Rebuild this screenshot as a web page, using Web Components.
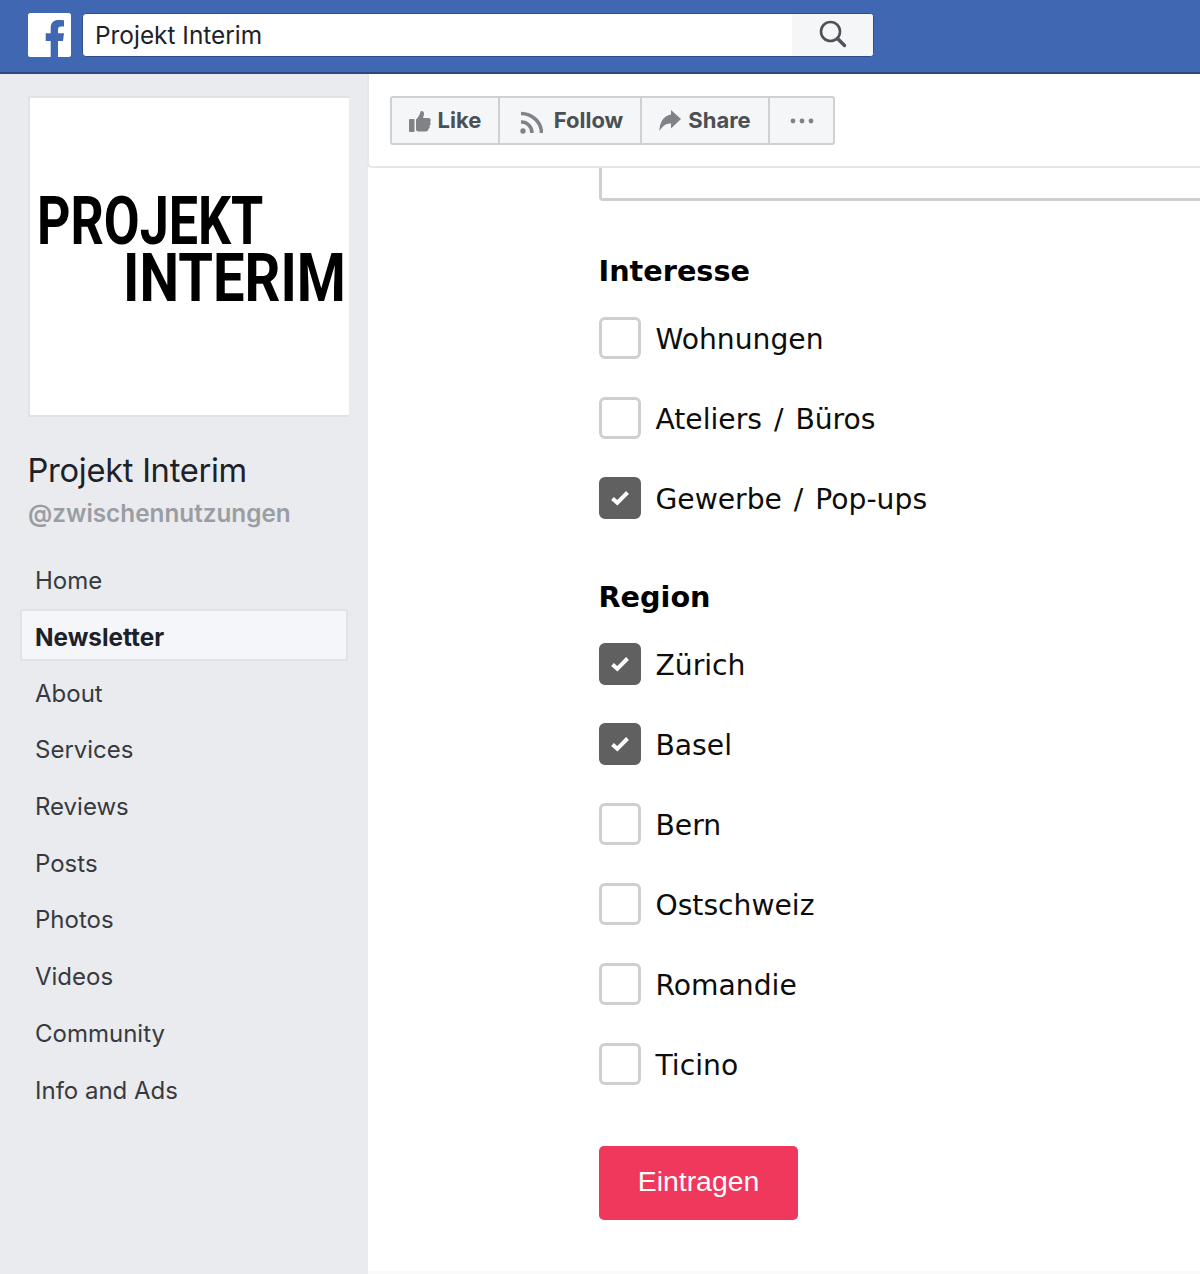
<!DOCTYPE html>
<html lang="de">
<head>
<meta charset="utf-8">
<title>Projekt Interim</title>
<style>
  html, body { margin: 0; padding: 0; background: #fff; }
  body { width: 1200px; height: 1274px; overflow: hidden; font-family: "Inter", "Liberation Sans", sans-serif; }
</style>
</head>
<body>
<fb-page>
  <fb-header slot="header" query="Projekt Interim"></fb-header>
  <fb-sidebar slot="sidebar" name="Projekt Interim" handle="@zwischennutzungen">
    <nav-item>Home</nav-item>
    <nav-item active>Newsletter</nav-item>
    <nav-item>About</nav-item>
    <nav-item>Services</nav-item>
    <nav-item>Reviews</nav-item>
    <nav-item>Posts</nav-item>
    <nav-item>Photos</nav-item>
    <nav-item>Videos</nav-item>
    <nav-item>Community</nav-item>
    <nav-item>Info and Ads</nav-item>
  </fb-sidebar>
  <action-bar slot="actions"></action-bar>
  <signup-form slot="content">
    <check-group title="Interesse">
      <check-row>Wohnungen</check-row>
      <check-row>Ateliers / Büros</check-row>
      <check-row checked>Gewerbe / Pop-ups</check-row>
    </check-group>
    <check-group title="Region">
      <check-row checked>Zürich</check-row>
      <check-row checked>Basel</check-row>
      <check-row>Bern</check-row>
      <check-row>Ostschweiz</check-row>
      <check-row>Romandie</check-row>
      <check-row>Ticino</check-row>
    </check-group>
  </signup-form>
</fb-page>

<script>
class FbPage extends HTMLElement {
    constructor() {
        super()
        this.attachShadow({ mode: "open" }).innerHTML = `
        <style>
            :host { display: grid; grid-template-columns: 368px 1fr; grid-template-rows: 74px 1200px; width: 1200px; height: 1274px; }
            .top { grid-column: 1 / 3; }
            .main { display: flex; flex-direction: column; min-width: 0; }
            .foot { margin-top: auto; height: 3px; background: #fafafa; }
        </style>
        <div class="top"><slot name="header"></slot></div>
        <slot name="sidebar"></slot>
        <div class="main">
            <slot name="actions"></slot>
            <slot name="content"></slot>
            <div class="foot"></div>
        </div>
        `
    }
}

class FbHeader extends HTMLElement {
    constructor() {
        super()
        this.attachShadow({ mode: "open" }).innerHTML = `
        <style>
            :host { display: block; box-sizing: border-box; height: 74px; background: #4067b2; border-bottom: 2px solid #29487d; }
            .row { display: flex; align-items: flex-start; gap: 11px; padding: 13px 0 0 28px; }
            .logo { width: 43px; height: 44px; display: block; }
            .search { display: flex; width: 792px; height: 44px; box-sizing: border-box; border: 1px solid #2f4d8c; border-radius: 4px; overflow: hidden; background: #fff; }
            .query { flex: 1; padding-left: 12px; font: 400 24.400px/42px "Inter", sans-serif; color: #1d2129; }
            .btn { width: 81px; background: #f5f6f7; display: flex; align-items: center; justify-content: center; }
            .btn svg { width: 30px; height: 30px; margin-top: -3px; }
        </style>
        <div class="row">
            <svg class="logo" viewBox="0 0 43 44">
                <rect width="43" height="44" rx="2.500" fill="#fff"/>
                <path fill="#4067b2" d="M22.700 44V28h-5v-7.700h5V15c0-5.500 3.300-8 7.800-8 2.300 0 4.500.2 5.500.3v6.200h-3c-2.200 0-3 1.100-3 3v3.800h6l-1 7.700h-5v16z"/>
            </svg>
            <div class="search">
                <div class="query">${this.getAttribute("query")}</div>
                <div class="btn">
                    <svg viewBox="0 0 30 30" fill="none" stroke="#4f5359">
                        <circle cx="12.500" cy="12.500" r="9.500" stroke-width="2.600"/>
                        <path d="M19.500 19.500L26.500 26.500" stroke-width="3.400" stroke-linecap="round"/>
                    </svg>
                </div>
            </div>
        </div>
        `
    }
}

class FbSidebar extends HTMLElement {
    constructor() {
        super()
        this.attachShadow({ mode: "open" }).innerHTML = `
        <style>
            :host { display: block; background: #e9ebee; padding: 22px 20px 0 20px; box-sizing: border-box; font-family: "Inter", sans-serif; }
            .pic { width: 321px; height: 321px; margin-left: 8px; box-sizing: border-box; background: #fff; border: 2px solid #e0e2e6; border-right: 0; display: flex; flex-direction: column; justify-content: center; overflow: hidden; font: 700 67px/57.500px "Roboto", "Liberation Sans", sans-serif; color: #000; padding-bottom: 13px; }
            .pic span { display: block; white-space: nowrap; width: max-content; transform-origin: 0 50%; }
            .l1 { margin-left: 7px; transform: scaleX(.776); }
            .l2 { margin-left: 93px; transform: scaleX(.837); }
            .name { margin: 33px 0 0 7.500px; font-size: 32.700px; line-height: 40px; color: #1d2129; letter-spacing: -.3px; }
            .handle { margin: 7px 0 0 8px; font-size: 24.300px; line-height: 32px; font-weight: 600; color: #9a9da3; }
            nav { margin-top: 25px; display: flex; flex-direction: column; width: 328px; }
        </style>
        <div class="pic"><span class="l1">PROJEKT</span><span class="l2">INTERIM</span></div>
        <div class="name">${this.getAttribute("name")}</div>
        <div class="handle">${this.getAttribute("handle")}</div>
        <nav><slot></slot></nav>
        `
    }
}

class NavItem extends HTMLElement {
    constructor() {
        super()
        this.attachShadow({ mode: "open" }).innerHTML = `
        <style>
            :host { display: block; box-sizing: border-box; height: 56.700px; padding: 0 0 0 15px; font: 400 24px/53px "Inter", sans-serif; color: #373a40; }
            :host([active]) { background: #f5f6f9; border: 2px solid #e0e2e6; border-radius: 3px; font-weight: 700; font-size: 24.300px; color: #1d2129; padding-left: 13px; height: 52px; line-height: 52px; margin: -1.500px 0 5.500px; }
        </style>
        <slot></slot>
        `
    }
}

class ActionBar extends HTMLElement {
    constructor() {
        super()
        this.attachShadow({ mode: "open" }).innerHTML = `
        <style>
            :host { display: block; box-sizing: border-box; height: 94px; margin-left: -1px; padding: 22px 0 0 21px; border-left: 2px solid #e4e6ea; border-bottom: 2px solid #e4e6ea; border-bottom-left-radius: 5px; background: #fff; position: relative; z-index: 1; }
            .group { display: inline-flex; height: 49px; box-sizing: border-box; border: 2px solid #ced0d4; border-radius: 3px; background: #f5f6f7; font: 700 22px/45px "Inter", sans-serif; color: #4b4f56; }
            .b { display: flex; align-items: center; justify-content: center; gap: 7px; box-sizing: border-box; border-right: 2px solid #ced0d4; }
            .b:last-child { border-right: 0; }
            .like { width: 108px; }
            .follow { width: 142px; gap: 11px; padding-left: 3px; }
            .share { width: 128px; }
            .more { width: 63px; }
            svg { display: block; fill: #7f8388; }
        </style>
        <div class="group">
            <div class="b like">
                <svg width="22" height="22" viewBox="0 0 22 22"><rect x="0" y="9" width="5.500" height="13" rx="1"/><path d="M7 20V9.500c2-2 4-4.500 4.500-8 .2-1 3.800-1 3.500 2.500-.1 1.500-.6 2.500-1 4h5.500c2.500 0 2.800 3 1.500 4 1 1 .7 3-.5 3.700.6 1.300 0 2.800-1.200 3.300.2 1.500-.8 2.500-2.300 2.500h-7c-1.500 0-2.500-.7-3.500-1.500z"/></svg>
                <span>Like</span>
            </div>
            <div class="b follow">
                <svg width="23" height="23" viewBox="0 0 23 23" style="fill:none;margin-top:3px"><circle cx="3" cy="20" r="2.700" fill="#7f8388"/><path d="M1 11c6-.2 11 4.500 11 11M1 2.500c11 0 20.500 8.500 20.500 19.500" stroke="#7f8388" stroke-width="3.500"/></svg>
                <span>Follow</span>
            </div>
            <div class="b share">
                <svg width="22" height="21" viewBox="0 0 22 21"><path d="M12 0l10 9-10 9.500v-5C7 13 3.500 16 .5 21 .5 13 4 6 12 4.500z"/></svg>
                <span>Share</span>
            </div>
            <div class="b more">
                <svg width="24" height="6" viewBox="0 0 24 6"><circle cx="3" cy="3" r="2.400"/><circle cx="12" cy="3" r="2.400"/><circle cx="21" cy="3" r="2.400"/></svg>
            </div>
        </div>
        `
    }
}

class SignupForm extends HTMLElement {
    constructor() {
        super()
        this.attachShadow({ mode: "open" }).innerHTML = `
        <style>
            :host { display: block; padding-left: 231px; font-family: "DejaVu Sans", sans-serif; }
            .prev { height: 33px; box-sizing: border-box; border: 3px solid #cfcfcf; border-top: 0; border-right: 0; border-bottom-left-radius: 4px; }
            .groups { display: flex; flex-direction: column; gap: 56px; padding-top: 50px; }
            button { display: block; margin-top: 59px; width: 199px; height: 74px; border: 0; border-radius: 5px; background: #f0375c; color: #fff; font: 400 28.400px/70px "Liberation Sans", sans-serif; padding: 0 0 6px; }
        </style>
        <div class="prev"></div>
        <div class="groups"><slot></slot></div>
        <button type="button">Eintragen</button>
        `
    }
}

class CheckGroup extends HTMLElement {
    constructor() {
        super()
        this.attachShadow({ mode: "open" }).innerHTML = `
        <style>
            :host { display: block; }
            h3 { margin: 0 0 28px -.5px; font: 700 28.700px/40px "DejaVu Sans", sans-serif; color: #000; }
            .rows { display: flex; flex-direction: column; gap: 38px; }
        </style>
        <h3>${this.getAttribute("title")}</h3>
        <div class="rows"><slot></slot></div>
        `
    }
}

class CheckRow extends HTMLElement {
    constructor() {
        super()
        const mark = this.hasAttribute("checked")
            ? `<svg width="20" height="16" viewBox="0 0 20 16" fill="none"><path d="M2.500 8.500l4.800 4.300L17.500 2.500" stroke="#fff" stroke-width="4"/></svg>`
            : ``
        this.attachShadow({ mode: "open" }).innerHTML = `
        <style>
            :host { display: flex; align-items: center; gap: 14.500px; height: 42px; font: 400 28.200px/42px "DejaVu Sans", sans-serif; word-spacing: 3px; color: #0d0d0d; }
            .box { width: 42px; height: 42px; margin-top: -2px; align-self: flex-start; box-sizing: border-box; border: 3px solid #cfcfcf; border-radius: 6px; background: #fff; display: flex; align-items: center; justify-content: center; flex: none; }
            :host([checked]) .box { background: #606060; border-color: #606060; }
            .label { white-space: nowrap; }
        </style>
        <div class="box">${mark}</div>
        <div class="label"><slot></slot></div>
        `
    }
}

customElements.define('fb-page', FbPage)
customElements.define('fb-header', FbHeader)
customElements.define('fb-sidebar', FbSidebar)
customElements.define('nav-item', NavItem)
customElements.define('action-bar', ActionBar)
customElements.define('signup-form', SignupForm)
customElements.define('check-group', CheckGroup)
customElements.define('check-row', CheckRow)
</script>
</body>
</html>
